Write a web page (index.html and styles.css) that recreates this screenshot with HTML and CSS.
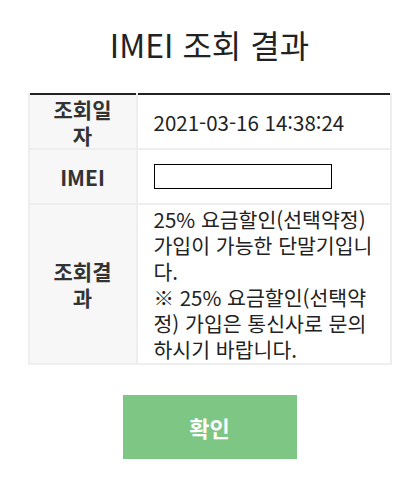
FILE: index.html
```html
<!DOCTYPE html>
<html lang="ko">
<head>
    <meta charset="UTF-8">
    <title>IMEI 조회 결과</title>
    <link rel="stylesheet" href="styles.css">
</head>
<body>
    <div class="wrap">
        <h1 class="title">IMEI 조회 결과</h1>
        <table class="result">
            <colgroup>
                <col class="col-head">
                <col>
            </colgroup>
            <tr>
                <th>조회일자</th>
                <td>2021-03-16 14:38:24</td>
            </tr>
            <tr>
                <th>IMEI</th>
                <td><div class="imei-box"></div></td>
            </tr>
            <tr>
                <th>조회결과</th>
                <td class="msg">25% 요금할인(선택약정) 가입이 가능한 단말기입니다.<br>※ 25% 요금할인(선택약정) 가입은 통신사로 문의하시기 바랍니다.</td>
            </tr>
        </table>
        <div class="btn-area">
            <button class="btn-ok">확인</button>
        </div>
    </div>
</body>
</html>
```

FILE: styles.css
```css
body { margin: 0; background: #fff; color: #333; font-family: "Noto Sans CJK KR", "Noto Sans", sans-serif; }
.wrap { padding-top: 24px; }
.title { margin: 0 0 29px; text-align: center; font-size: 32px; font-weight: 400; line-height: 40px; color: #222; }
.result { width: 364px; margin: 0 auto; border-collapse: collapse; table-layout: fixed; border-top: 2px solid #222; }
.result .col-head { width: 108px; }
.result th, .result td { border: 2px solid #eee; font-size: 20.5px; line-height: 26px; }
.result th { background: #f7f7f7; font-size: 21px; font-weight: 700; padding: 0 18px; text-align: center; color: #333; }
.result td { padding: 0 16px; color: #222; }
.result tr:first-child th, .result tr:first-child td { border-top: none; height: 53px; }
.result tr:nth-child(2) th, .result tr:nth-child(2) td { height: 53px; }
.result .msg { padding-top: 1px; padding-bottom: 1px; }
.imei-box { width: 176px; height: 23px; border: 1px solid #000; background: #fff; }
.btn-area { margin-top: 30px; text-align: center; }
.btn-ok { width: 174px; height: 64px; border: none; background: #7dc683; color: #fff; font-family: inherit; font-size: 22px; font-weight: 700; cursor: pointer; }
```
